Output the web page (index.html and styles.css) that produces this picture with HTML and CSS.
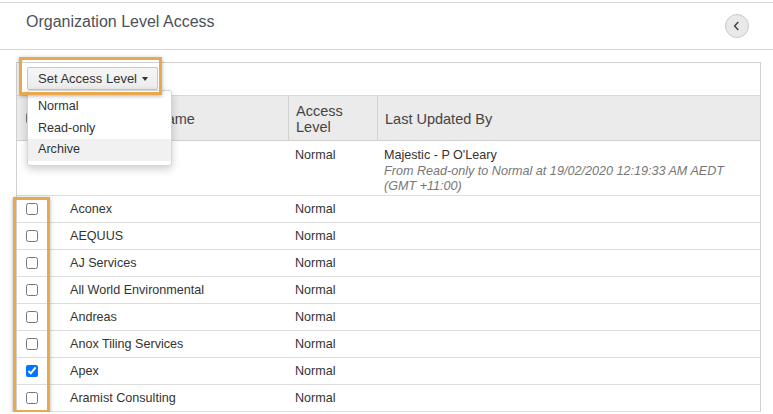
FILE: index.html
```html
<!DOCTYPE html>
<html lang="en">

<head>
    <meta charset="UTF-8">
    <meta name="viewport" content="width=device-width, initial-scale=1.0">
    <title>Organization Level Access</title>
    <link rel="stylesheet" href="styles.css">
</head>

<body>
    <div class="topbar">
        <h2 class="title">Organization Level Access</h2>
        <a class="back" href="">
            <svg width="10" height="10" viewBox="0 0 10 10">
                <path d="M6.3 1 L2.6 5 L6.3 9" fill="none" stroke="#444" stroke-width="1.5" />
            </svg>
        </a>
    </div>

    <div class="panel">
        <div class="toolbar">
            <button class="btn">Set Access Level <span class="caret"></span></button>
            <ul class="menu">
                <li>Normal</li>
                <li>Read-only</li>
                <li class="active">Archive</li>
            </ul>
            <!-- highlight box round the button -->
            <div class="mark mark-btn"></div>
        </div>

        <table class="grid">
            <colgroup>
                <col class="c-check">
                <col class="c-name">
                <col class="c-level">
                <col>
            </colgroup>
            <thead>
                <tr>
                    <th><input type="checkbox"></th>
                    <th>Organization Name</th>
                    <th class="sep">Access<br>Level</th>
                    <th class="sep">Last Updated By</th>
                </tr>
            </thead>
            <tbody>
                <tr class="tall">
                    <td></td>
                    <td>Majestic</td>
                    <td>Normal</td>
                    <td>Majestic - P O'Leary<br><em>From Read-only to Normal at 19/02/2020 12:19:33 AM AEDT (GMT +11:00)</em></td>
                </tr>
                <tr>
                    <td><input type="checkbox"></td>
                    <td>Aconex</td>
                    <td>Normal</td>
                    <td></td>
                </tr>
                <tr>
                    <td><input type="checkbox"></td>
                    <td>AEQUUS</td>
                    <td>Normal</td>
                    <td></td>
                </tr>
                <tr>
                    <td><input type="checkbox"></td>
                    <td>AJ Services</td>
                    <td>Normal</td>
                    <td></td>
                </tr>
                <tr>
                    <td><input type="checkbox"></td>
                    <td>All World Environmental</td>
                    <td>Normal</td>
                    <td></td>
                </tr>
                <tr>
                    <td><input type="checkbox"></td>
                    <td>Andreas</td>
                    <td>Normal</td>
                    <td></td>
                </tr>
                <tr>
                    <td><input type="checkbox"></td>
                    <td>Anox Tiling Services</td>
                    <td>Normal</td>
                    <td></td>
                </tr>
                <tr>
                    <td><input type="checkbox" checked></td>
                    <td>Apex</td>
                    <td>Normal</td>
                    <td></td>
                </tr>
                <tr>
                    <td><input type="checkbox"></td>
                    <td>Aramist Consulting</td>
                    <td>Normal</td>
                    <td></td>
                </tr>
            </tbody>
        </table>

        <!-- highlight box round the checkboxes -->
        <div class="mark mark-checks"></div>
    </div>
</body>

</html>
```

FILE: styles.css
```css
body,
h2,
ul,
li {
    margin: 0;
    padding: 0;
    font-weight: normal;
    list-style: none;
}

body {
    font-family: "Liberation Sans", Arial, sans-serif;
    color: #333;
    background: #fff;
    overflow: hidden;
}

/* page header */
.topbar {
    margin-top: 2px;
    height: 46px;
    border-top: 1px solid #d6d6d6;
    border-bottom: 1px solid #d6d6d6;
    display: flex;
    justify-content: space-between;
    align-items: center;
    padding: 0 24px 0 26px;
}

.title {
    font-size: 16px;
    line-height: 19px;
    color: #4c5157;
    align-self: flex-start;
    margin-top: 9px;
}

.back {
    width: 22px;
    height: 22px;
    border: 1px solid #c9c9c9;
    border-radius: 50%;
    background: #e9e9e9;
    display: flex;
    align-items: center;
    justify-content: center;
}

/* table panel */
.panel {
    margin: 12px 12px 0 16px;
    border: 1px solid #d0d0d0;
    border-bottom: none;
    position: relative;
}

.toolbar {
    height: 32px;
    padding: 4px 0 0 10px;
    box-sizing: border-box;
    position: relative;
}

.btn {
    height: 23px;
    padding: 0 9px 0 10px;
    border: 1px solid #c6c6c6;
    border-radius: 2px;
    background: linear-gradient(#f6f6f6, #ececec);
    font-family: "Liberation Sans", Arial, sans-serif;
    font-size: 13px;
    color: #333;
    display: flex;
    align-items: center;
    gap: 5px;
}

.caret {
    width: 0;
    height: 0;
    border-top: 4px solid #333;
    border-left: 3.5px solid transparent;
    border-right: 3.5px solid transparent;
}

.menu {
    position: absolute;
    left: 10px;
    top: 27px;
    width: 143px;
    padding: 5px 0 4px;
    background: #fff;
    border: 1px solid #d6d6d6;
    border-radius: 3px;
    box-shadow: 0 3px 8px rgba(0, 0, 0, 0.2);
    z-index: 5;
}

.menu li {
    height: 21.5px;
    line-height: 21.5px;
    padding-left: 10px;
    font-size: 12.6px;
    color: #333;
}

.menu .active {
    background: #f1f1f1;
}

/* grid */
.grid {
    width: 100%;
    border-collapse: separate;
    border-spacing: 0;
    table-layout: fixed;
    font-size: 12.6px;
}

.c-check {
    width: 46px;
}

.c-name {
    width: 225px;
}

.c-level {
    width: 89px;
}

.grid th {
    height: 42px;
    padding: 2px 7px 0;
    background: #ebebeb;
    border-top: 1px solid #d8d8d8;
    border-bottom: 1px solid #cfcfcf;
    font-size: 14.5px;
    line-height: 16.5px;
    font-weight: normal;
    color: #444;
    text-align: left;
    vertical-align: middle;
}

.grid th.sep {
    border-left: 1px solid #d2d2d2;
}

.grid td {
    height: 25px;
    padding: 1px 7px 0;
    border-bottom: 1px solid #dedede;
    line-height: 15px;
    vertical-align: middle;
}

.grid th:first-child,
.grid td:first-child {
    padding: 0 0 0 9px;
}

.grid .tall td {
    height: auto;
    padding-top: 7px;
    padding-bottom: 0.5px;
    line-height: 15.5px;
    vertical-align: top;
}

.grid em {
    color: #777;
}

.grid input {
    width: 12px;
    height: 12px;
    margin: 0;
    display: block;
}

/* orange highlight boxes */
.mark {
    position: absolute;
    border: 3px solid #eaa84e;
    box-shadow: 0 1px 4px rgba(0, 0, 0, 0.3);
    z-index: 6;
    pointer-events: none;
}

.mark-btn {
    left: 2px;
    top: -6px;
    width: 137px;
    height: 32px;
}

.mark-checks {
    left: -4px;
    top: 134px;
    width: 31px;
    height: 210px;
}
```
